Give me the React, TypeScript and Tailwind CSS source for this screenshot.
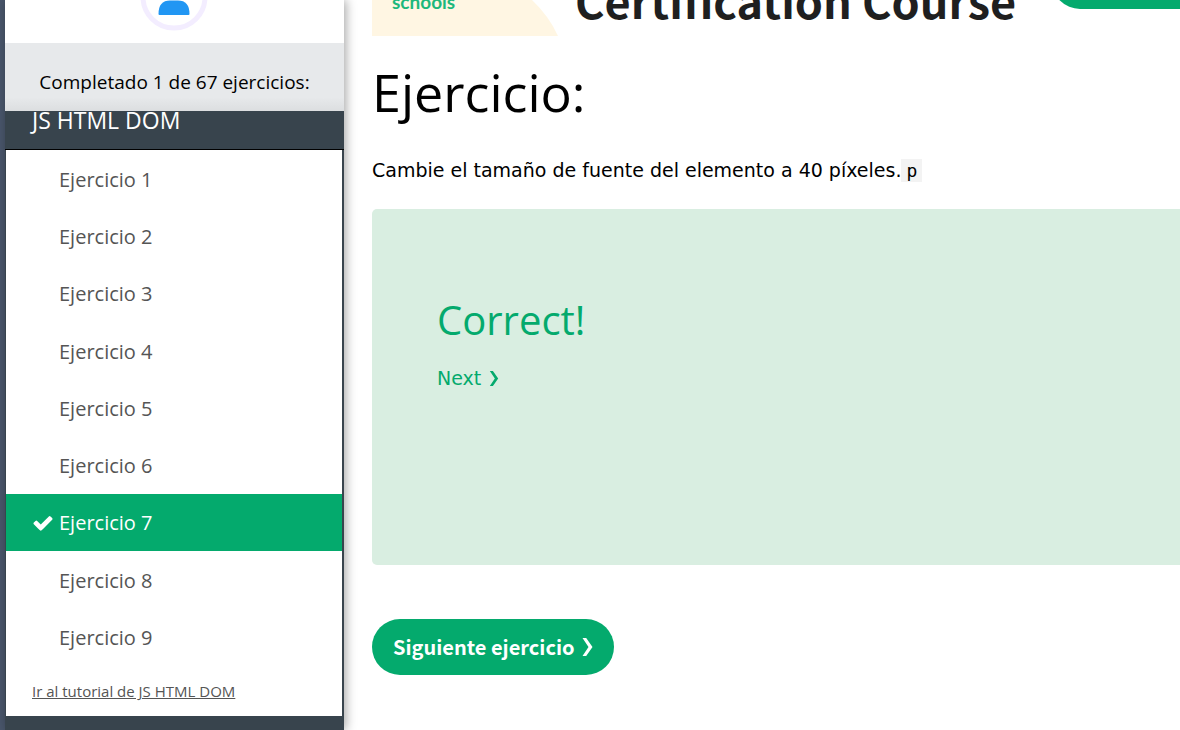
import React from "react";

const exercises = [1, 2, 3, 4, 5, 6, 7, 8, 9];
const current = 7;

function CheckIcon() {
  return (
    <svg viewBox="0 0 1792 1792" className="h-[22px] w-[22px]" fill="currentColor" aria-hidden="true">
      <path d="M1671 566q0 40-28 68l-724 724-136 136q-28 28-68 28t-68-28l-136-136-362-362q-28-28-28-68t28-68l136-136q28-28 68-28t68 28l294 295 656-657q28-28 68-28t68 28l136 136q28 28 28 68z" />
    </svg>
  );
}

function Chevron({ className }: { className: string }) {
  return (
    <svg viewBox="0 0 10 18" className={className} fill="currentColor" aria-hidden="true">
      <path d="M0 0H3.7L10 9 3.7 18H0L6 9Z" />
    </svg>
  );
}

function Sidebar() {
  return (
    <aside className="z-10 flex w-[339px] shrink-0 flex-col bg-[#38444d] font-['Open_Sans','Noto_Sans',sans-serif] shadow-[2px_0_10px_rgba(0,0,0,0.35)]">
      <div className="flex h-[43px] items-end justify-center overflow-hidden bg-white pr-[2px] pb-3">
        <svg viewBox="0 0 68 68" className="h-[68px] w-[68px] shrink-0" aria-hidden="true">
          <circle cx="34" cy="34" r="31" fill="#fff" stroke="#f3edff" strokeWidth="5" />
          <circle cx="34" cy="26" r="9" fill="#2196f3" />
          <path d="M18.500 51Q18.500 37.500 30 37.500H38Q49.500 37.500 49.500 51Q49.500 52 48.500 52H19.500Q18.500 52 18.500 51Z" fill="#2196f3" />
        </svg>
      </div>
      <p className="flex h-[68px] items-center justify-center bg-[linear-gradient(#e7e9eb_80%,#dcdee0)] pt-[10px] text-[19px] leading-7 text-black">
        Completado 1 de 67 ejercicios:
      </p>
      <h2 className="flex h-[39px] items-end overflow-hidden border-b border-black pb-[13px] pl-[27px] text-[23px] leading-8 text-white">
        JS HTML DOM
      </h2>
      <nav className="mr-[2px] ml-px bg-white">
        <ul className="grid h-[516px] auto-rows-fr">
          {exercises.map((n) => (
            <li key={n}>
              <a
                href={`#ejercicio-${n}`}
                className={
                  n === current
                    ? "flex h-full items-center bg-[#04aa6d] pt-px pl-[26px] text-[20px] leading-7 text-white"
                    : "flex h-full items-center pt-[2px] pl-[26px] text-[20px] leading-7 text-[#555]"
                }
              >
                <span className="w-[27px] shrink-0">{n === current && <CheckIcon />}</span>
                Ejercicio {n}
              </a>
            </li>
          ))}
        </ul>
        <div className="flex h-[50px] items-center pl-[26px]">
          <a href="#tutorial" className="text-[15px] leading-6 text-[#555] underline">
            Ir al tutorial de JS HTML DOM
          </a>
        </div>
      </nav>
    </aside>
  );
}

function Banner() {
  return (
    <a href="#curso" className="flex h-9 items-end overflow-hidden font-['Noto_Sans_CJK_SC',sans-serif] font-bold">
      <div className="relative flex h-9 w-[187px] shrink-0 items-end">
        <svg viewBox="0 0 187 36" className="absolute inset-0 h-full w-full" aria-hidden="true">
          <path d="M0 0H160Q177 16 186 36H0Z" fill="#fff6e3" />
        </svg>
        <span className="relative pb-[22px] pl-5 font-['Lato',sans-serif] text-[19px] leading-6 font-bold text-[#1db87c]">schools</span>
      </div>
      <span className="shrink-0 pb-[6px] pl-4 text-[45px] leading-[60px] whitespace-nowrap text-[#1f1f1f]">
        Certification Course
      </span>
      <span className="mb-[27px] ml-9 h-14 w-[240px] shrink-0 rounded-full bg-[#04aa6d]" />
    </a>
  );
}

export default function App() {
  return (
    <div className="flex min-h-screen overflow-hidden bg-white text-black">
      <div className="w-[5px] shrink-0 bg-[#49566b]" />
      <Sidebar />
      <main className="min-w-0 flex-1 pl-7 font-['DejaVu_Sans',sans-serif]">
        <Banner />
        <h1 className="pt-[14px] font-['Open_Sans','Noto_Sans',sans-serif] text-[52px] leading-[84px]">Ejercicio:</h1>
        <p className="pt-[22px] text-[19px] leading-7 whitespace-nowrap">
          Cambie el tamaño de fuente del elemento a 40 píxeles.
          <code className="bg-[#f3f3f3] px-[5px] py-px font-['DejaVu_Sans_Mono',monospace] text-[18px]">p</code>
        </p>
        <section className="mt-6 h-[356px] rounded-l-[5px] bg-[#d9eee1] pt-[81px] pl-[65px] text-[#04aa6d]">
          <h2 className="font-['Open_Sans','Noto_Sans',sans-serif] text-[40px] leading-[60px]">Correct!</h2>
          <a href="#siguiente" className="mt-[14px] flex w-fit items-center gap-2 text-[19px] leading-7">
            Next
            <Chevron className="h-[15px] w-[10px]" />
          </a>
        </section>
        <button
          type="button"
          className="mt-[54px] flex h-14 items-center gap-[7px] rounded-full bg-[#04aa6d] px-[21px] pb-px font-['Noto_Sans_CJK_SC',sans-serif] text-[20px] leading-8 font-bold text-white"
        >
          Siguiente ejercicio
          <Chevron className="h-[18px] w-[11px]" />
        </button>
      </main>
    </div>
  );
}
